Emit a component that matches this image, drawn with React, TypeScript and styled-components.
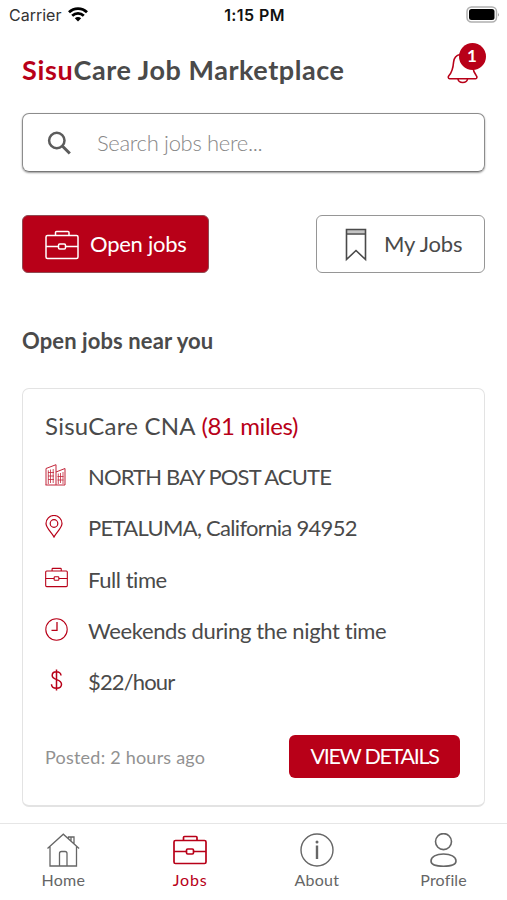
import React from "react";
import styled, { createGlobalStyle } from "styled-components";

const RED = "#b80018";
const INK = "#4a4a4a";

const GlobalStyle = createGlobalStyle`
  * { box-sizing: border-box; }
  body { margin: 0; background: #fff; }
  button, input { font-family: inherit; }
`;

const Screen = styled.div`
  display: flex;
  flex-direction: column;
  width: 100%;
  height: 900px;
  overflow: hidden;
  background: #fff;
  color: ${INK};
  font-family: Lato, "Open Sans", sans-serif;
`;

const StatusBar = styled.div`
  display: grid;
  grid-template-columns: 1fr auto 1fr;
  align-items: center;
  height: 30px;
  padding: 0 7px 0 9px;
  color: #111;
  font: 400 16px/30px Inter, sans-serif;
`;

const Carrier = styled.span`
  display: flex;
  align-items: center;
  gap: 7px;
  color: #333;
`;

const Clock = styled.span`
  font-weight: 600;
  letter-spacing: 0.4px;
`;

const BatteryIcon = styled.svg`
  justify-self: end;
  margin-top: -2px;
`;

const WifiIcon = styled.svg`
  margin-top: -1px;
`;

const Header = styled.header`
  display: flex;
  align-items: center;
  justify-content: space-between;
  height: 83px;
  padding: 0 21px 0 22px;
`;

const Title = styled.h1`
  margin: -4px 0 0;
  font-size: 27px;
  line-height: 32px;
  font-weight: 700;
  letter-spacing: 0.55px;
`;

const Accent = styled.span<{ $spacing?: number }>`
  color: ${RED};
  letter-spacing: ${(p) => p.$spacing ?? 0.7}px;
`;

const BellButton = styled.button`
  position: relative;
  width: 39px;
  height: 44px;
  margin-top: -14px;
  padding: 0;
  border: 0;
  background: none;
`;

const BellIcon = styled.svg`
  position: absolute;
  left: 0;
  top: 9px;
`;

const Badge = styled.span`
  position: absolute;
  top: 0;
  right: 0.5px;
  width: 27px;
  height: 27px;
  border-radius: 50%;
  background: ${RED};
  color: #fff;
  font-size: 17px;
  line-height: 26px;
  font-weight: 700;
  text-align: center;
`;

const SearchBox = styled.label`
  display: flex;
  align-items: center;
  gap: 25px;
  height: 59px;
  margin: 0 22px;
  padding: 0 24px 0 23px;
  border: 1px solid #8c8c8c;
  border-bottom-color: #777;
  border-radius: 7px;
  box-shadow: 0 1px 2px rgba(0, 0, 0, 0.4);
`;

const SearchInput = styled.input`
  flex: 1;
  min-width: 0;
  padding: 0 0 1px;
  border: 0;
  outline: 0;
  background: none;
  font-size: 22px;
  letter-spacing: -0.33px;
  font-weight: 300;
  &::placeholder { color: #888; opacity: 1; }
`;

const Tabs = styled.div`
  display: flex;
  justify-content: space-between;
  margin: 43px 22px 0;
`;

const TabButton = styled.button<{ $active?: boolean }>`
  display: flex;
  align-items: center;
  width: ${(p) => (p.$active ? 187 : 169)}px;
  height: 58px;
  gap: ${(p) => (p.$active ? 11 : 16)}px;
  padding: 0 0 1px ${(p) => (p.$active ? 22 : 27)}px;
  border: 1px solid ${(p) => (p.$active ? "#8f4a52" : "#969696")};
  border-radius: 6px;
  background: ${(p) => (p.$active ? RED : "#fff")};
  color: ${(p) => (p.$active ? "#fff" : INK)};
  font-size: 22px;
  letter-spacing: ${(p) => (p.$active ? -0.25 : -0.1)}px;
  svg { position: relative; top: 1px; }
`;

const SectionTitle = styled.h2`
  margin: 54px 22px 0;
  font-size: 22px;
  line-height: 28px;
  font-weight: 700;
  letter-spacing: 0.1px;
`;

const Card = styled.article`
  height: 419px;
  margin: 33px 22px 0;
  padding: 20px 24px 0 22px;
  border: 1px solid #e3e3e3;
  border-bottom-width: 2px;
  border-radius: 7px;
`;

const JobTitle = styled.h3`
  margin: 0;
  font-size: 24px;
  line-height: 34px;
  font-weight: 400;
  letter-spacing: 0.25px;
`;

const Facts = styled.ul`
  display: grid;
  grid-auto-rows: 51.3px;
  margin: 8px 0 0;
  padding: 0;
  list-style: none;
`;

const Fact = styled.li<{ $spacing: number }>`
  display: grid;
  grid-template-columns: 22px 1fr;
  gap: 21px;
  align-items: center;
  font-size: 22px;
  letter-spacing: ${(p) => p.$spacing}px;
  white-space: nowrap;
  svg { margin-top: -3px; color: ${RED}; }
`;

const CardFooter = styled.footer`
  display: flex;
  align-items: center;
  justify-content: space-between;
  margin-top: 28px;
`;

const Posted = styled.span`
  color: #919191;
  font-size: 18px;
  letter-spacing: 0.22px;
`;

const DetailsButton = styled.button`
  width: 171px;
  height: 43px;
  padding: 0 0 2px;
  border: 0;
  border-radius: 6px;
  background: ${RED};
  color: #fff;
  font-size: 21.5px;
  letter-spacing: -1.3px;
  white-space: nowrap;
`;

const NavBar = styled.nav`
  display: grid;
  grid-template-columns: repeat(4, 1fr);
  height: 77px;
  margin-top: auto;
  border-top: 1px solid #e6e6e6;
`;

const NavItem = styled.a<{ $active?: boolean; $spacing: number }>`
  display: flex;
  flex-direction: column;
  align-items: center;
  gap: 1px;
  padding-top: 9px;
  color: ${(p) => (p.$active ? RED : "#666")};
  font-size: 16px;
  line-height: 24px;
  letter-spacing: ${(p) => p.$spacing}px;
  svg { display: block; }
`;

const Briefcase = ({ width, height, stroke = 1.5 }: { width: number; height: number; stroke?: number }) => (
  <svg width={width} height={height} viewBox="0 0 34 34" fill="none" stroke="currentColor" strokeWidth={stroke}>
    <rect x="1" y="7.500" width="32" height="23" rx="1.5" />
    <path d="M10.5 7.500V4.500q0-1 1-1H23q1 0 1 1v3M1 18.500h12.500M20.500 18.500H33" />
    <rect x="13.5" y="16" width="7" height="5" rx="1.200" />
  </svg>
);

const Ribbon = () => (
  <svg width="24" height="36" viewBox="0 0 24 36" fill="none" stroke="currentColor" strokeWidth="1.600">
    <path d="M3 4.700h18" stroke="#c4c4c4" strokeWidth="3.400" />
    <path d="M2.500 2.500h19v30L12 23.500 2.500 32.500zM2.500 7h19" />
  </svg>
);

const Buildings = () => (
  <svg width="22" height="22" viewBox="0 0 22 22" fill="none" stroke={RED} strokeWidth="0.8" opacity="0.85">
    <path d="M1 21V4.500L11 .7V21M11 8l9-3.500V21H.500" strokeWidth="1" />
    <path d="M3.300 20V6.300M5.500 19V5.500M8.200 19V5M3 8.500h6M3 12h6M3 15.500h6M13.300 20V9.500M15.500 19V9M18 20V8M12.500 12.500h6M12.500 16h6" />
  </svg>
);

const Pin = () => (
  <svg width="18" height="23" viewBox="0 0 18 23" fill="none" stroke={RED} strokeWidth="1.200">
    <path d="M9 22C7.500 18.500 1 13 1 8.500a8 8 0 0 1 16 0C17 13 10.500 18.500 9 22z" />
    <circle cx="9" cy="8.500" r="3.800" />
  </svg>
);

const ClockFace = () => (
  <svg width="23" height="23" viewBox="0 0 23 23" fill="none" stroke={RED} strokeWidth="1.100">
    <circle cx="11.500" cy="11.500" r="10.700" />
    <path d="M12 4v8.300H6.500" strokeWidth="1.300" />
  </svg>
);

const Dollar = () => (
  <svg width="22" height="24" viewBox="0 0 22 24" fill="none" stroke={RED} strokeWidth="1.500">
    <path d="M11.500 1.500v21M16 7.500c0-2.400-2-3.700-4.500-3.700S7.200 5.300 7.200 7.500c0 5.200 9.300 3 9.300 8.700 0 2.600-2.200 4-5 4s-5-1.500-5-4" />
  </svg>
);

const House = () => (
  <svg width="34" height="34" viewBox="0 0 34 34" fill="none" stroke="currentColor" strokeWidth="1.300">
    <path d="M1.500 15.500 17.300 1.200l15.800 14.300M4 13.300V33h26.500V13.300M13.500 33V20.500q0-2 2-2h3.500q2 0 2 2V33M22.500 5.500V4H28v6.500M25 4.500v3.500" />
  </svg>
);

const Info = () => (
  <svg width="34" height="34" viewBox="0 0 34 34" fill="none" stroke="currentColor" strokeWidth="1.400">
    <circle cx="17" cy="17" r="16" />
    <path d="M17 12.500v13.500" strokeWidth="2.400" />
    <circle cx="17" cy="9" r="1.500" fill="currentColor" stroke="none" />
  </svg>
);

const Person = () => (
  <svg width="34" height="34" viewBox="0 0 34 34" fill="none" stroke="currentColor" strokeWidth="1.600">
    <circle cx="16.500" cy="8.600" r="8" />
    <path d="M4 28c0-4.300 5.300-7 12.500-7S29 23.700 29 28c0 3.500-4 5.200-12.500 5.200S4 31.500 4 28z" />
  </svg>
);

const facts = [
  { icon: <Buildings />, text: "NORTH BAY POST ACUTE", spacing: -0.85 },
  { icon: <Pin />, text: "PETALUMA, California 94952", spacing: -0.7 },
  { icon: <Briefcase width={23} height={23} stroke={1.6} />, text: "Full time", spacing: -0.45 },
  { icon: <ClockFace />, text: "Weekends during the night time", spacing: -0.35 },
  { icon: <Dollar />, text: "$22/hour", spacing: -0.85 },
];

export default function App() {
  return (
    <Screen>
      <GlobalStyle />
      <StatusBar>
        <Carrier>
          Carrier
          <WifiIcon width="20" height="15" viewBox="0 0 20 15" fill="none" stroke="#000" strokeWidth="2.700">
            <path d="M1 5.300c5-5 13-5 18 0M4.200 8.800c3.300-3.300 8.300-3.300 11.600 0" />
            <path d="M6.800 11.300c1.800-1.800 4.600-1.800 6.400 0L10 14.500z" fill="#000" stroke="none" />
          </WifiIcon>
        </Carrier>
        <Clock>1:15 PM</Clock>
        <BatteryIcon width="34" height="17" viewBox="0 0 34 17">
          <rect x="1" y="1" width="29.500" height="15" rx="4.500" fill="#fff" stroke="#b0b0b0" strokeWidth="1.500" />
          <rect x="3" y="3" width="25.500" height="11" rx="2.500" fill="#000" />
          <path d="M32 6.500q1.700 2 0 4z" fill="#999" />
        </BatteryIcon>
      </StatusBar>

      <Header>
        <Title><Accent>Sisu</Accent>Care Job Marketplace</Title>
        <BellButton aria-label="Notifications">
          <BellIcon width="32" height="32" viewBox="0 0 32 32" fill="none" stroke={RED} strokeWidth="1.600">
            <path d="M13 2.500C9 3.300 7 6 6.600 10c-.5 6-1.300 10-4.600 13.500-1.200 1.300-.8 3.300.6 3.300h26c1.400 0 1.800-2 .6-3.300-2-2.500-3-5-3.500-9" />
            <path d="M11 27c.5 4.600 9 4.600 9.500 0" />
          </BellIcon>
          <Badge>1</Badge>
        </BellButton>
      </Header>

      <SearchBox>
        <svg width="26" height="26" viewBox="0 0 26 26" fill="none" stroke="#5c5c5c" strokeWidth="2.500">
          <circle cx="10.800" cy="10.500" r="7.700" />
          <path d="m16.300 16 7.500 7.500" strokeWidth="3" />
        </svg>
        <SearchInput placeholder="Search jobs here..." />
      </SearchBox>

      <Tabs>
        <TabButton $active><Briefcase width={34} height={34} />Open jobs</TabButton>
        <TabButton><Ribbon />My Jobs</TabButton>
      </Tabs>

      <SectionTitle>Open jobs near you</SectionTitle>

      <Card>
        <JobTitle>SisuCare CNA <Accent $spacing={-0.4}>(81 miles)</Accent></JobTitle>
        <Facts>
          {facts.map((f) => (
            <Fact key={f.text} $spacing={f.spacing}>{f.icon}<span>{f.text}</span></Fact>
          ))}
        </Facts>
        <CardFooter>
          <Posted>Posted: 2 hours ago</Posted>
          <DetailsButton>VIEW DETAILS</DetailsButton>
        </CardFooter>
      </Card>

      <NavBar>
        <NavItem $spacing={0.3}><House />Home</NavItem>
        <NavItem $active $spacing={0.8}><Briefcase width={34} height={34} stroke={1.7} />Jobs</NavItem>
        <NavItem $spacing={0.3}><Info />About</NavItem>
        <NavItem $spacing={0.15}><Person />Profile</NavItem>
      </NavBar>
    </Screen>
  );
}
